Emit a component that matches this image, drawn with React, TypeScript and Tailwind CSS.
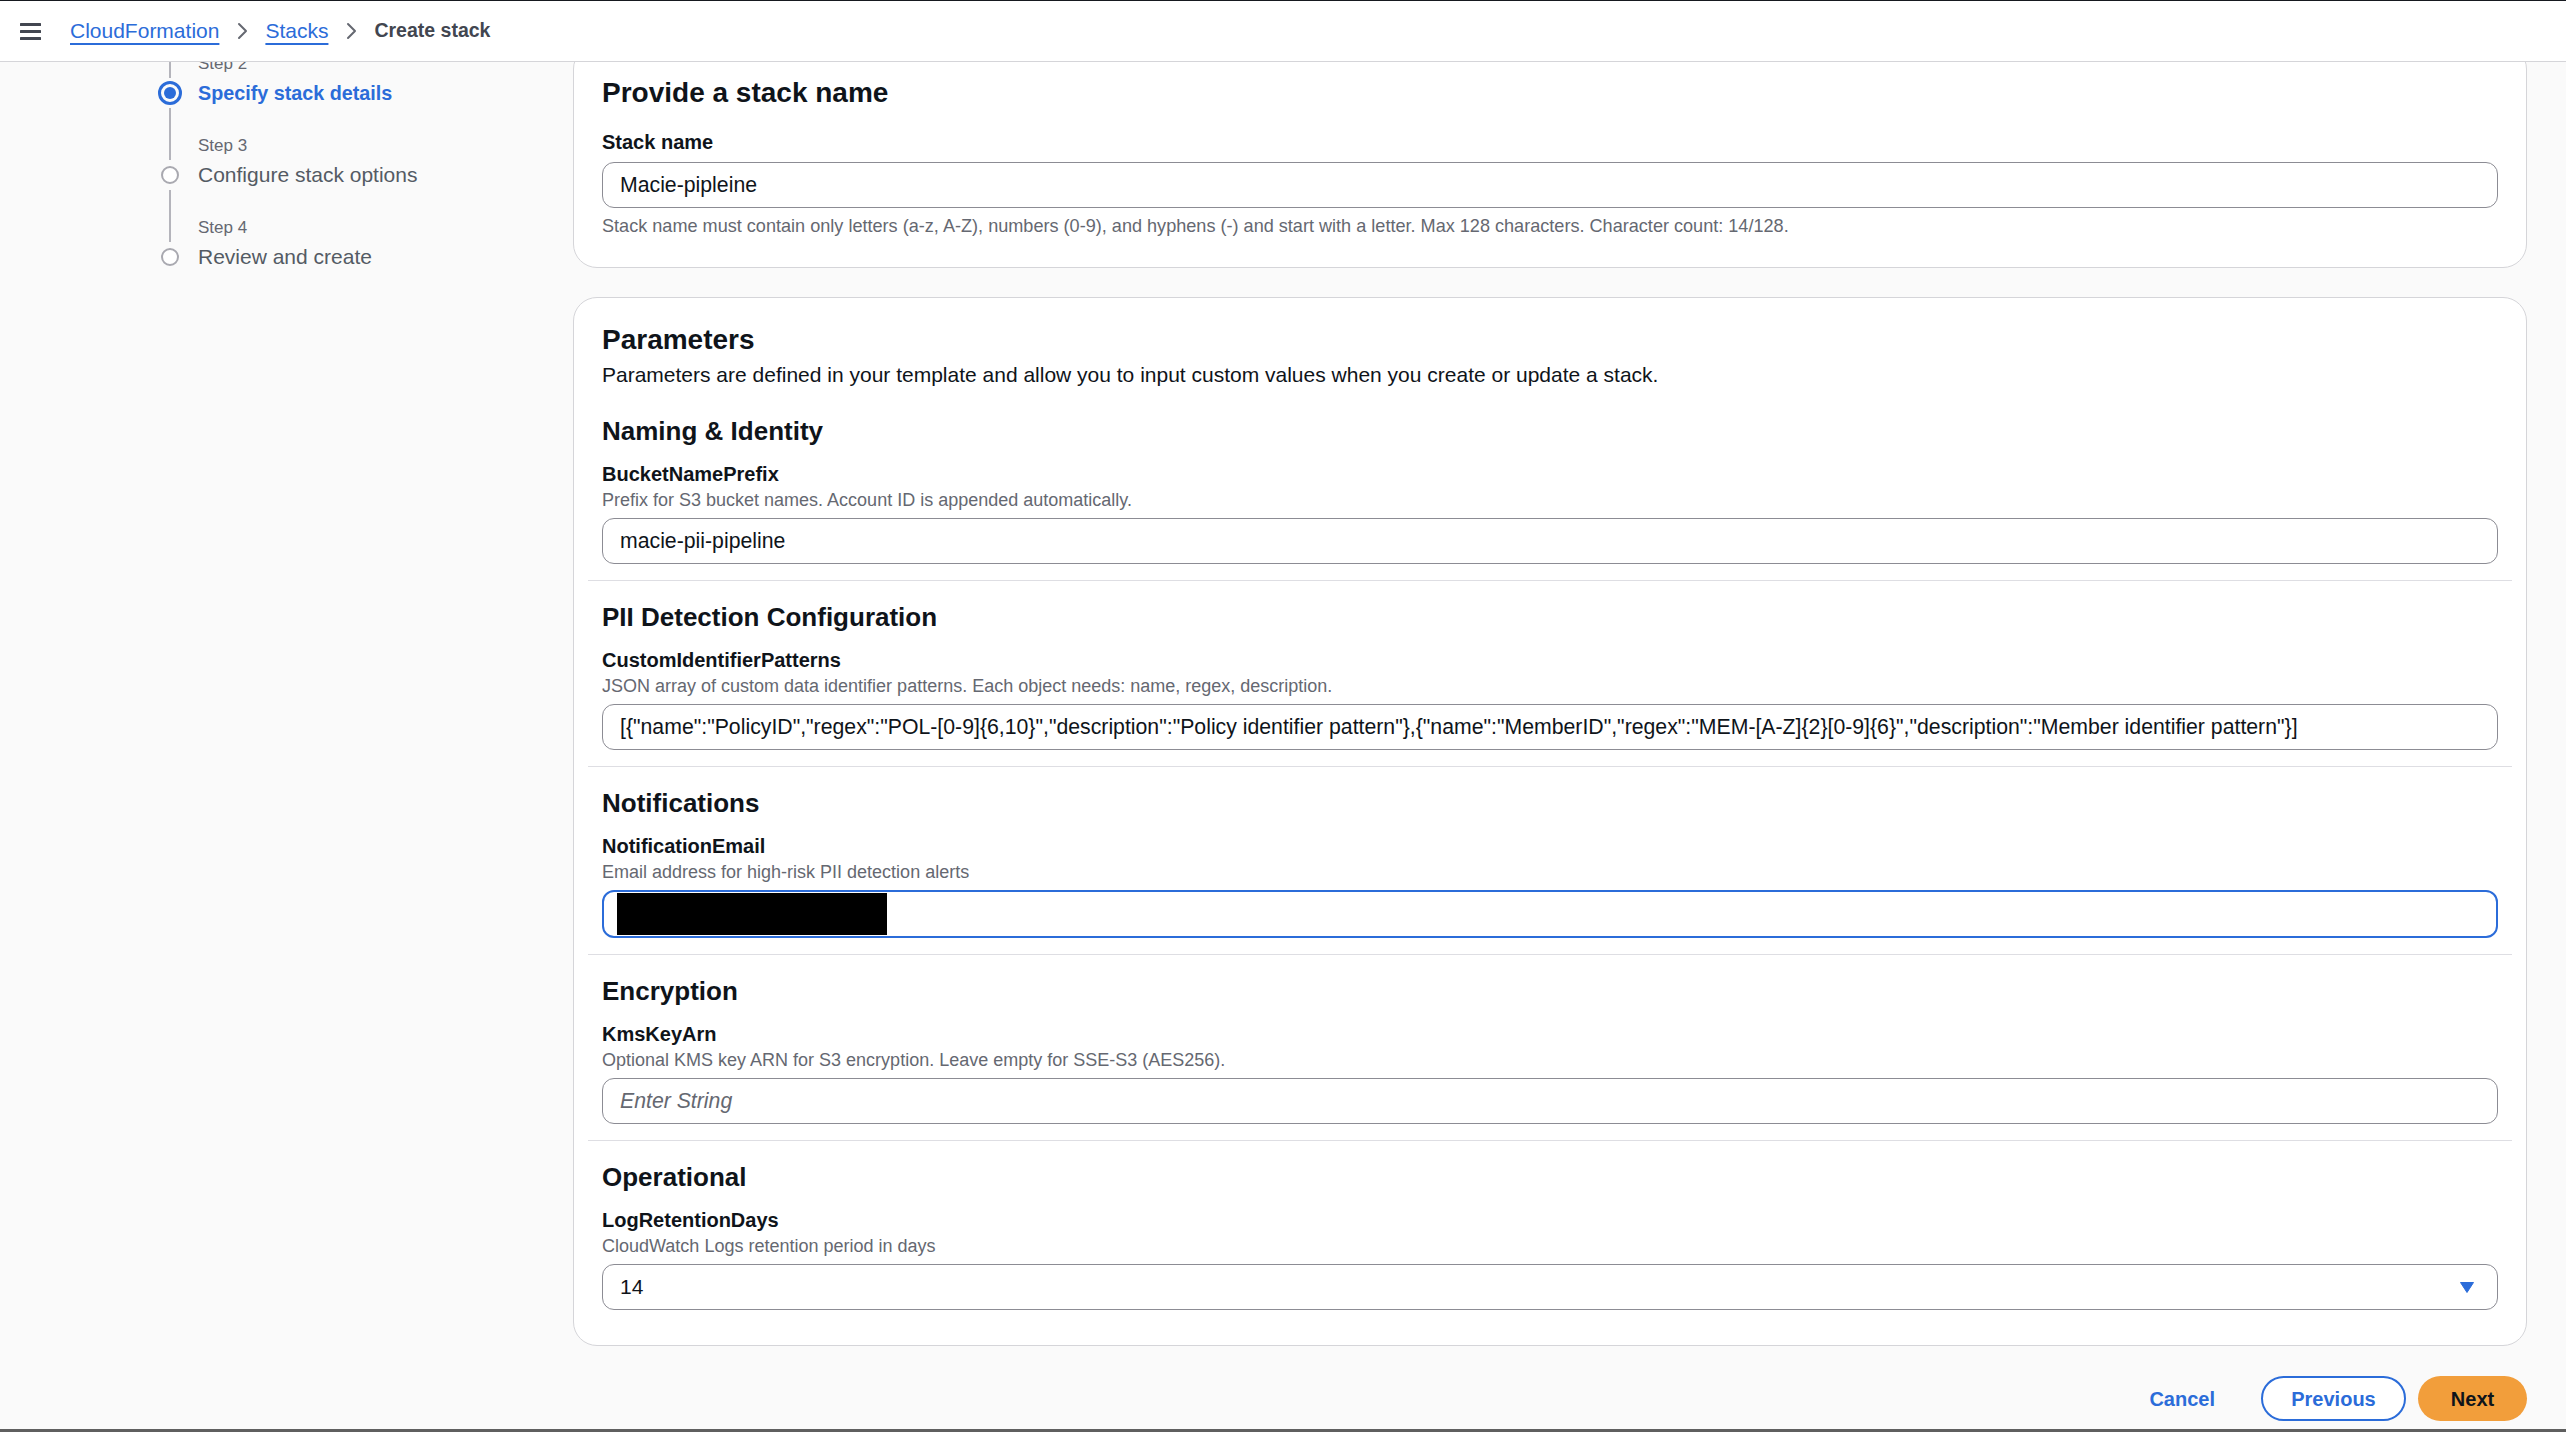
import React from "react";

const BLUE = "#2b6cd9";

function Hamburger() {
  return (
    <svg width="21" height="19" viewBox="0 0 21 19" className="shrink-0">
      <rect x="0" y="1" width="21" height="3" rx="0.5" fill="#424650" />
      <rect x="0" y="8" width="21" height="3" rx="0.5" fill="#424650" />
      <rect x="0" y="15" width="21" height="3" rx="0.5" fill="#424650" />
    </svg>
  );
}

function Chevron() {
  return (
    <svg width="12" height="18" viewBox="0 0 12 18" className="shrink-0">
      <path d="M3 2 L10 9 L3 16" fill="none" stroke="#656871" strokeWidth="2" strokeLinecap="round" strokeLinejoin="round" />
    </svg>
  );
}

function Header() {
  return (
    <header className="relative z-10 h-[62px] shrink-0 bg-white border-t border-[#16191f] border-b border-b-[#d5d5d9] flex items-center pl-[20px]">
      <Hamburger />
      <nav className="flex items-center ml-[29px] text-[21px] gap-[17px]">
        <a className="text-[#2b6cd9] underline underline-offset-[5px] decoration-[1.5px]">CloudFormation</a>
        <Chevron />
        <a className="text-[#2b6cd9] underline underline-offset-[5px] decoration-[1.5px]">Stacks</a>
        <Chevron />
        <span className="font-bold text-[19.5px] text-[#424650]">Create stack</span>
      </nav>
    </header>
  );
}

type Step = { label: string; title: string; active?: boolean; last?: boolean };

const steps: Step[] = [
  { label: "Step 2", title: "Specify stack details", active: true },
  { label: "Step 3", title: "Configure stack options" },
  { label: "Step 4", title: "Review and create", last: true },
];

function StepNav() {
  return (
    <aside className="w-[573px] shrink-0 pl-[158px]">
      <ol className="-mt-[11px] flex flex-col">
        {steps.map((s) => (
          <li key={s.label} className="grid grid-cols-[24px_1fr] gap-x-[16px]">
            <div className="flex justify-center h-[25px]">
              <div className="w-[2px] h-full bg-[#b4b4bb]" />
            </div>
            <div className="h-[25px] text-[17px] leading-[25px] text-[#656871]">{s.label}</div>
            <div className="flex flex-col items-center h-[34px]">
              <div className="w-[2px] h-[2px] bg-[#b4b4bb]" />
              {s.active ? (
                <div className="mt-[3px] w-[24px] h-[24px] rounded-full border-[3px] border-[#2b6cd9] flex items-center justify-center">
                  <div className="w-[12px] h-[12px] rounded-full bg-[#2b6cd9]" />
                </div>
              ) : (
                <div className="mt-[6px] w-[18px] h-[18px] rounded-full border-2 border-[#a9a9b0] bg-white" />
              )}
              {!s.last && <div className={`w-[2px] flex-1 bg-[#b4b4bb] ${s.active ? "mt-[3px]" : "mt-[6px]"}`} />}
            </div>
            <div
              className={`mt-[2px] h-[30px] leading-[30px] ${
                s.active ? "font-bold text-[#2b6cd9] text-[19.75px]" : "text-[21px] text-[#545b64]"
              }`}
            >
              {s.title}
            </div>
            <div className="flex justify-center h-[23px]">
              {!s.last && <div className="w-[2px] h-full bg-[#b4b4bb]" />}
            </div>
            <div className="h-[23px]" />
          </li>
        ))}
      </ol>
    </aside>
  );
}

function TextInput({ value, placeholder }: { value?: string; placeholder?: string }) {
  return (
    <input
      readOnly
      defaultValue={value}
      placeholder={placeholder}
      className="block w-full h-[46px] rounded-[12px] border border-[#8c8c94] bg-white pl-[17px] pr-[17px] text-[21.25px] text-[#0f141a] outline-none placeholder:italic placeholder:text-[#656871]"
    />
  );
}

function FocusedRedacted() {
  return (
    <div className="w-full h-[48px] rounded-[12px] border-2 border-[#2b6cd9] bg-white pl-[13px] flex items-center">
      <div className="w-[270px] h-[42px] bg-black" />
    </div>
  );
}

function SelectBox({ value }: { value: string }) {
  return (
    <div className="w-full h-[46px] rounded-[12px] border border-[#8c8c94] bg-white pl-[17px] pr-[23px] flex items-center justify-between text-[21px] text-[#0f141a]">
      <span>{value}</span>
      <svg width="14" height="11" viewBox="0 0 14 11">
        <path d="M0.5 0.5 H13.5 L7 10.5 Z" fill={BLUE} stroke={BLUE} strokeLinejoin="round" />
      </svg>
    </div>
  );
}

function Field({
  heading,
  label,
  desc,
  children,
}: {
  heading: string;
  label: string;
  desc: string;
  children: React.ReactNode;
}) {
  return (
    <section className="px-[14px]">
      <h3 className="text-[26px] leading-[30px] font-bold text-[#0f141a]">{heading}</h3>
      <div className="mt-[14px] text-[20px] leading-[28px] font-bold text-[#0f141a]">{label}</div>
      <div className="text-[18px] leading-[24px] text-[#656871]">{desc}</div>
      <div className="mt-[6px]">{children}</div>
    </section>
  );
}

function Divider() {
  return <div className="h-px bg-[#dedee3] mt-[16px] mb-[21px]" />;
}

export default function App() {
  return (
    <div className="w-[2566px] h-[1432px] overflow-hidden flex flex-col bg-[#fafafa] border-b-[3px] border-[#5f5f5f] font-['Liberation_Sans',Arial,sans-serif]">
      <Header />
      <div className="flex flex-1 min-h-0 overflow-hidden">
        <StepNav />
        <main className="flex-1 pr-[39px]">
          <div className="-mt-[17px] bg-white border border-[#d5d5d9] rounded-[24px] px-[14px] pt-[30px] pb-[29px]">
            <div className="px-[14px]">
              <h2 className="text-[28px] leading-[34px] font-bold text-[#0f141a]">Provide a stack name</h2>
              <div className="mt-[18px] text-[20px] leading-[28px] font-bold text-[#0f141a]">Stack name</div>
              <div className="mt-[6px]">
                <TextInput value="Macie-pipleine" />
              </div>
              <p className="mt-[6px] text-[18.1px] leading-[24px] text-[#656871]">
                Stack name must contain only letters (a-z, A-Z), numbers (0-9), and hyphens (-) and start with a letter. Max 128 characters. Character count: 14/128.
              </p>
            </div>
          </div>

          <div className="mt-[29px] bg-white border border-[#d5d5d9] rounded-[24px] px-[14px] pt-[25px] pb-[35px]">
            <div className="px-[14px]">
              <h2 className="text-[28px] leading-[34px] font-bold text-[#0f141a]">Parameters</h2>
              <p className="mt-[4px] text-[21px] leading-[28px] text-[#0f141a]">
                Parameters are defined in your template and allow you to input custom values when you create or update a stack.
              </p>
            </div>
            <div className="mt-[27px]">
              <Field
                heading="Naming & Identity"
                label="BucketNamePrefix"
                desc="Prefix for S3 bucket names. Account ID is appended automatically."
              >
                <TextInput value="macie-pii-pipeline" />
              </Field>
              <Divider />
              <Field
                heading="PII Detection Configuration"
                label="CustomIdentifierPatterns"
                desc="JSON array of custom data identifier patterns. Each object needs: name, regex, description."
              >
                <TextInput value={'[{"name":"PolicyID","regex":"POL-[0-9]{6,10}","description":"Policy identifier pattern"},{"name":"MemberID","regex":"MEM-[A-Z]{2}[0-9]{6}","description":"Member identifier pattern"}]'} />
              </Field>
              <Divider />
              <Field
                heading="Notifications"
                label="NotificationEmail"
                desc="Email address for high-risk PII detection alerts"
              >
                <FocusedRedacted />
              </Field>
              <Divider />
              <Field
                heading="Encryption"
                label="KmsKeyArn"
                desc="Optional KMS key ARN for S3 encryption. Leave empty for SSE-S3 (AES256)."
              >
                <TextInput placeholder="Enter String" />
              </Field>
              <Divider />
              <Field
                heading="Operational"
                label="LogRetentionDays"
                desc="CloudWatch Logs retention period in days"
              >
                <SelectBox value="14" />
              </Field>
            </div>
          </div>

          <div className="mt-[30px] flex items-center justify-end gap-[12px]">
            <button className="h-[45px] px-[22px] mr-[12px] text-[20px] font-bold text-[#2b6cd9]">Cancel</button>
            <button className="h-[45px] w-[145px] rounded-full border-2 border-[#2b6cd9] bg-white text-[20px] font-bold text-[#2b6cd9]">
              Previous
            </button>
            <button className="h-[45px] w-[109px] rounded-full bg-[#f29e3b] text-[20px] font-bold text-[#0f141a]">
              Next
            </button>
          </div>
        </main>
      </div>
    </div>
  );
}
